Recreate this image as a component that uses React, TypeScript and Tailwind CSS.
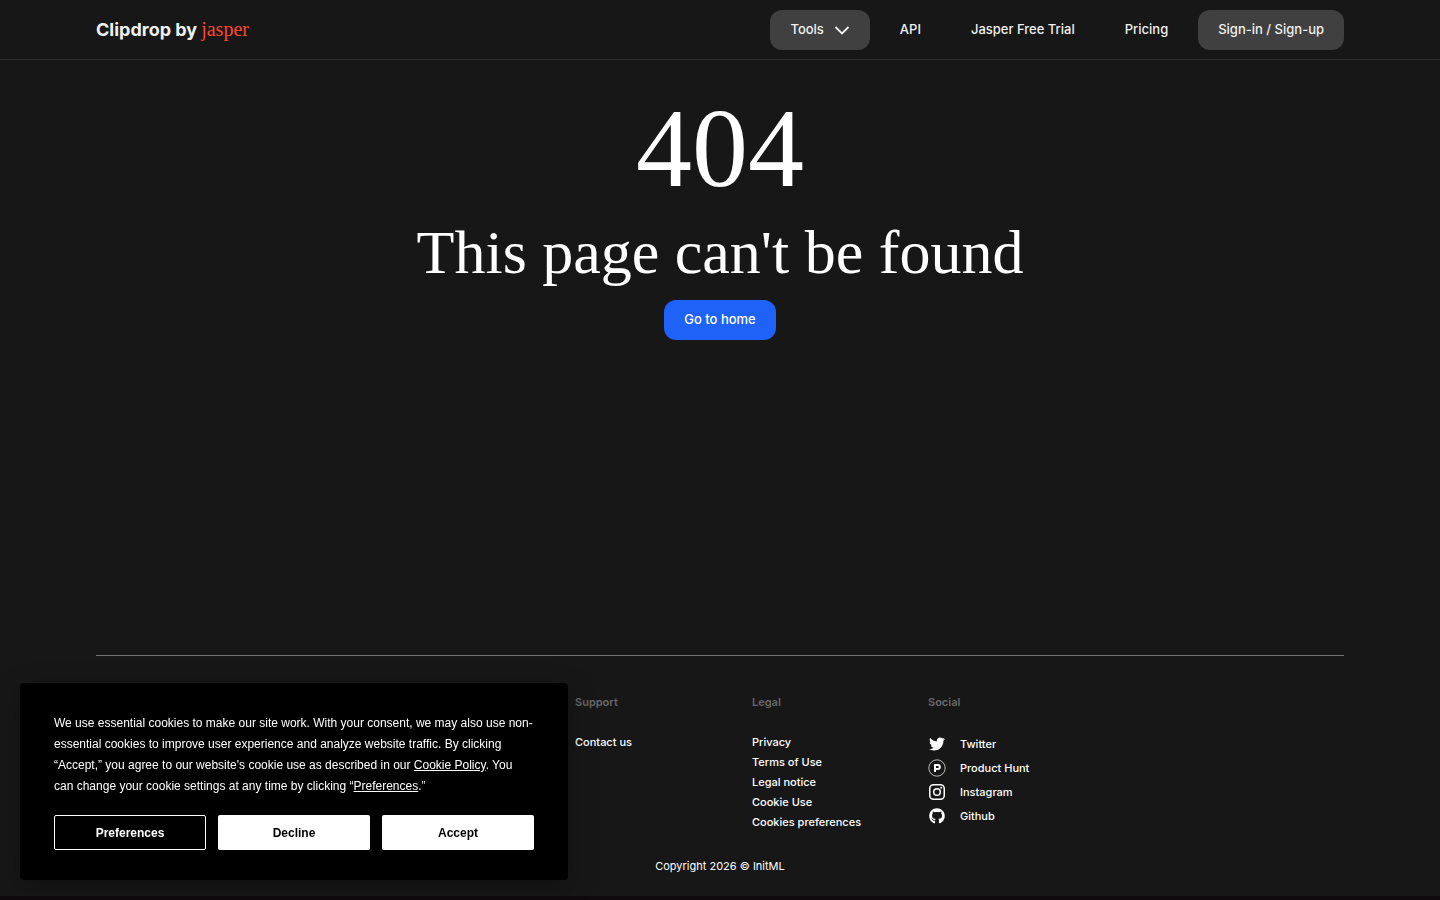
import type { ReactNode } from "react";
import { FaGithub, FaTwitter } from "react-icons/fa";

const legalLinks = ["Privacy", "Terms of Use", "Legal notice", "Cookie Use", "Cookies preferences"];

const ProductHuntIcon = () => (
  <svg viewBox="0 0 18 18" className="size-[18px]" fill="none" stroke="currentColor" aria-hidden="true">
    <circle cx="9" cy="9" r="8.2" strokeWidth="0.7" />
    <path d="M7 13V6h2.9a1.9 1.9 0 0 1 0 3.9H7" strokeWidth="2" />
  </svg>
);

const InstagramIcon = () => (
  <svg viewBox="0 0 16 16" className="size-4" fill="none" stroke="currentColor" aria-hidden="true">
    <rect x="0.75" y="0.75" width="14.5" height="14.5" rx="3.8" strokeWidth="1.5" />
    <circle cx="8" cy="8" r="3.3" strokeWidth="1.5" />
    <circle cx="12.2" cy="3.8" r="1" fill="currentColor" stroke="none" />
  </svg>
);

const socialLinks = [
  { label: "Twitter", icon: <FaTwitter className="size-4" /> },
  { label: "Product Hunt", icon: <ProductHuntIcon /> },
  { label: "Instagram", icon: <InstagramIcon /> },
  { label: "Github", icon: <FaGithub className="size-4" /> },
];

const Header = () => (
  <header className="border-b border-[#303030]">
    <div className="mx-24 flex h-[59px] items-center justify-between">
      <a href="#" className="flex items-baseline gap-1 text-lg font-bold text-[#f0f0f0]">
        Clipdrop by
        <span className="font-['Liberation_Serif',serif] text-xl font-normal text-[#ff4530]">jasper</span>
      </a>
      <nav className="flex items-center gap-2.5 text-[13px] font-medium text-[#f0f0f0]">
        <button type="button" className="flex h-10 items-center gap-2.5 rounded-xl bg-[#404040] px-5">
          Tools
          <svg viewBox="0 0 16 16" className="size-4" fill="none" stroke="currentColor" strokeWidth="1.8" aria-hidden="true">
            <path d="M1.5 5 8 11.5 14.5 5" />
          </svg>
        </button>
        <a href="#" className="px-5 py-2.5">API</a>
        <a href="#" className="px-5 py-2.5">Jasper Free Trial</a>
        <a href="#" className="px-5 py-2.5">Pricing</a>
        <a href="#" className="flex h-10 items-center rounded-xl bg-[#404040] px-5">Sign-in / Sign-up</a>
      </nav>
    </div>
  </header>
);

const FooterColumn = ({ title, className, children }: { title: string; className?: string; children: ReactNode }) => (
  <div className={className}>
    <h2 className="mb-5 font-semibold text-[#686868]">{title}</h2>
    {children}
  </div>
);

const Footer = () => (
  <footer className="mx-24 border-t border-[#737373] pt-9 pb-5 text-[11px] leading-5 font-medium">
    <div className="grid grid-cols-[479fr_177fr_176fr_416fr]">
      <FooterColumn title="Support" className="col-start-2">
        <a href="#">Contact us</a>
      </FooterColumn>
      <FooterColumn title="Legal">
        <ul>
          {legalLinks.map((label) => (
            <li key={label}>
              <a href="#">{label}</a>
            </li>
          ))}
        </ul>
      </FooterColumn>
      <FooterColumn title="Social">
        <ul>
          {socialLinks.map(({ label, icon }) => (
            <li key={label}>
              <a href="#" className="flex h-6 items-center gap-3.5">
                <span className="flex w-[18px] justify-center">{icon}</span>
                {label}
              </a>
            </li>
          ))}
        </ul>
      </FooterColumn>
    </div>
    <p className="mt-6 text-center font-normal">Copyright 2026 © InitML</p>
  </footer>
);

const CookieBanner = () => (
  <section
    aria-label="Cookie consent"
    className="fixed bottom-5 left-5 w-[548px] rounded bg-black px-[34px] py-[30px] font-['Liberation_Sans',sans-serif] text-xs shadow-[0_8px_28px_rgba(0,0,0,0.28)]"
  >
    <p className="leading-[21px]">
      We use essential cookies to make our site work. With your consent, we may also use non-essential cookies to
      improve user experience and analyze website traffic. By clicking “Accept,” you agree to our website's cookie use
      as described in our <a href="#" className="underline">Cookie Policy</a>. You can change your cookie settings at
      any time by clicking “<a href="#" className="underline">Preferences</a>.”
    </p>
    <div className="mt-[18px] grid grid-cols-3 gap-3 font-bold">
      <button type="button" className="h-[35px] rounded-xs border border-white">Preferences</button>
      <button type="button" className="h-[35px] rounded-xs bg-white text-black">Decline</button>
      <button type="button" className="h-[35px] rounded-xs bg-white text-black">Accept</button>
    </div>
  </section>
);

const App = () => (
  <div className="flex min-h-screen flex-col border-b-4 border-[#100a0f] bg-[#171717] font-['Inter',sans-serif] text-white">
    <Header />
    <main className="flex flex-1 flex-col items-center pt-8 text-center">
      <h1 className="font-['Liberation_Serif',serif]">
        <span className="block text-[112px] leading-[112px]">404</span>
        <span className="mt-3 block text-[62px] leading-[72px]">This page can't be found</span>
      </h1>
      <a href="#" className="mt-3 flex h-10 items-center rounded-xl bg-[#1f62f8] px-5 text-[13px] font-medium">
        Go to home
      </a>
    </main>
    <Footer />
    <CookieBanner />
  </div>
);

export default App;
